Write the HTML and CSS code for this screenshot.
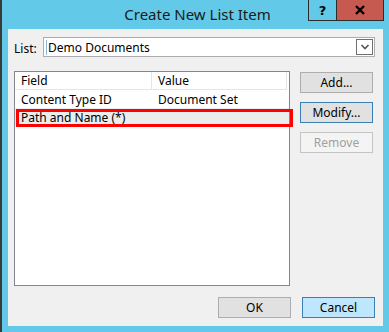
FILE: index.html
```html
<!DOCTYPE html>
<html lang="en">
  <head>
    <meta charset="UTF-8" />
    <title>Create New List Item</title>
    <link rel="stylesheet" href="styles.css">
  </head>
  <body>
    <div class="window">
      <div class="titlebar">
        <span></span>
        <span class="title">Create New List Item</span>
        <div class="caption">
          <span class="cap help">?</span>
          <span class="cap close">
            <svg width="12" height="10" viewBox="0 0 12 10">
              <path d="M2 1 L10 9 M10 1 L2 9" stroke="#000" stroke-width="2.4" />
            </svg>
          </span>
        </div>
      </div>
      <div class="client">
        <div class="list-row">
          <label class="list-label">List:</label>
          <div class="combo">
            <span class="combo-text">Demo Documents</span>
            <span class="combo-btn">
              <svg width="10" height="8" viewBox="0 0 10 8">
                <path d="M1.5 2 L5 5.5 L8.5 2" fill="none" stroke="#555" stroke-width="1.6" />
              </svg>
            </span>
          </div>
        </div>
        <div class="middle">
          <div class="listview">
            <div class="lv-head">
              <span class="col-field">Field</span>
              <span class="col-value">Value</span>
            </div>
            <div class="lv-row">
              <span class="col-field">Content Type ID</span>
              <span class="col-value">Document Set</span>
            </div>
            <div class="lv-row marked">
              <span class="col-field">Path and Name (*)</span>
              <span class="col-value"></span>
            </div>
          </div>
          <div class="side-buttons">
            <button type="button" class="btn">Add...</button>
            <button type="button" class="btn focus">Modify...</button>
            <button type="button" class="btn" disabled>Remove</button>
          </div>
        </div>
        <div class="footer">
          <button type="button" class="btn">OK</button>
          <button type="button" class="btn cancel">Cancel</button>
        </div>
      </div>
    </div>
  </body>
</html>
```

FILE: styles.css
```css
body {
  margin: 0;
  font-family: "Noto Sans", "Open Sans", sans-serif;
  font-size: 12px;
  color: #000;
}

.window {
  width: 387px;
  height: 332px;
  background-color: #63c9e9;
  border-left: 2px solid #3a3a3a;
  display: flex;
  flex-direction: column;
}

.titlebar {
  height: 29px;
  display: grid;
  grid-template-columns: 1fr auto 1fr;
  align-items: start;
}
.title {
  font-size: 15px;
  line-height: 29px;
  color: #1a1a1a;
  margin-left: 4px;
}
.caption {
  display: flex;
  justify-content: flex-end;
  margin-right: 5px;
}
.cap {
  height: 20px;
  border: 1px solid #2c2c2c;
  border-top: none;
  display: flex;
  justify-content: center;
  align-items: center;
}
.help {
  width: 27px;
  font-weight: bold;
  font-size: 13px;
  font-family: "DejaVu Sans", sans-serif;
}
.close {
  width: 46px;
  background-color: #c75a50;
  border-left: none;
}

.client {
  margin: 0 6px 0 6px;
  height: 297px;
  background-color: #f0f0f0;
  padding: 8px 8px 0 6px;
  box-sizing: border-box;
}

.list-row {
  display: flex;
  align-items: center;
  height: 20px;
}
.list-label {
  width: 29px;
  padding-top: 2px;
}
.combo {
  flex: 1;
  height: 20px;
  box-sizing: border-box;
  border: 1px solid #abadb3;
  background: #fff;
  display: flex;
  align-items: center;
  justify-content: space-between;
  padding: 0 1px 0 2px;
}
.combo-text {
  border-left: 1px solid #8fb4d6;
  padding-left: 1px;
  line-height: 15px;
}
.combo-btn {
  width: 15px;
  height: 14px;
  border: 1px solid #707070;
  display: flex;
  justify-content: center;
  align-items: center;
}

.middle {
  display: flex;
  margin-top: 14px;
  height: 215px;
}
.listview {
  width: 276px;
  box-sizing: border-box;
  border: 1px solid #828790;
  background: #fff;
  padding: 0 2px 0 0;
}
.lv-head,
.lv-row {
  display: flex;
  height: 18px;
  align-items: center;
}
.lv-head {
  height: 17px;
  border-bottom: 1px solid #e5e5e5;
  border-right: 1px solid #e5e5e5;
}
.col-field {
  width: 130px;
  padding-left: 6px;
  box-sizing: border-box;
}
.lv-head .col-field {
  border-right: 1px solid #e5e5e5;
  height: 100%;
  display: flex;
  align-items: center;
  width: 137px;
}
.col-value {
  padding-left: 6px;
}
.lv-row .col-field {
  width: 137px;
}
.lv-row.marked {
  background: #ececec;
  position: relative;
  margin-right: -2px;
}
.lv-row.marked::after {
  content: "";
  position: absolute;
  left: 1px;
  top: 1px;
  right: -4px;
  bottom: -1px;
  border: 3px solid #ff0000;
}

.side-buttons {
  display: flex;
  flex-direction: column;
  gap: 9px;
  margin-left: 10px;
  padding-top: 1px;
}

.btn {
  width: 73px;
  height: 21px;
  box-sizing: border-box;
  font-family: inherit;
  font-size: 12px;
  background: #e1e1e1;
  border: 1px solid #adadad;
  padding: 0;
  color: #000;
}
.btn.focus {
  border-color: #3c7fb1;
}
.btn:disabled {
  background: #f4f4f4;
  border-color: #c4c4c4;
  color: #a0a0a0;
}
.btn.cancel {
  background: #bee6fd;
  border-color: #3c7fb1;
}

.footer {
  display: flex;
  justify-content: flex-end;
  gap: 11px;
  margin-top: 11px;
}
```
